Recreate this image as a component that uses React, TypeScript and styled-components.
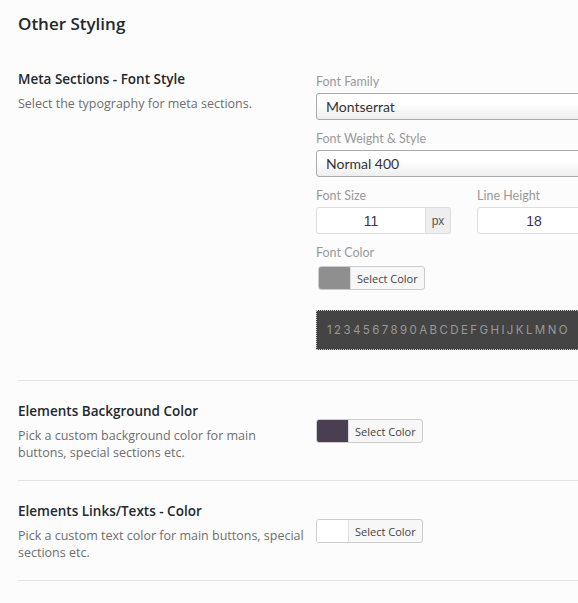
import React from 'react';
import styled, { createGlobalStyle } from 'styled-components';

const GlobalStyle = createGlobalStyle`
    html, body {
        margin: 0;
        padding: 0;
        background: #fcfcfc;
        overflow: hidden;
    }
    body {
        font-family: "Open Sans", "Noto Sans", sans-serif;
        color: #23282d;
    }
`;

const Page = styled.div`
    width: 760px;
    padding: 12px 0 0 18px;
`;

const Heading = styled.h2`
    margin: 0 0 21px;
    font-size: 17px;
    line-height: 24px;
    font-weight: 600;
    color: #23282d;
`;

const Row = styled.div<{ $first?: boolean }>`
    display: grid;
    grid-template-columns: 298px 1fr;
    padding: ${(p) => (p.$first ? '13px 0 20px' : '21px 0 19px')};
    border-bottom: 1px solid #e3e3e3;
`;

const Info = styled.div`
    padding-right: 10px;
`;

const RowTitle = styled.h3`
    margin: 0 0 7px;
    font-size: 13.5px;
    line-height: 18px;
    font-weight: 600;
    color: #23282d;
`;

const RowDesc = styled.p`
    margin: 0;
    font-size: 12.5px;
    line-height: 17px;
    color: #6e6e6e;
`;

const Controls = styled.div<{ $top?: number }>`
    display: flex;
    flex-direction: column;
    padding-top: ${(p) => p.$top ?? 0}px;
`;

const Field = styled.div`
    display: flex;
    flex-direction: column;
    margin-bottom: 10px;
`;

const FieldLabel = styled.label`
    font-family: Lato, "Open Sans", sans-serif;
    font-size: 12.5px;
    line-height: 18px;
    color: #9a9a9a;
    margin-bottom: 2px;
`;

const SelectBox = styled.div`
    height: 27px;
    box-sizing: border-box;
    border: 1px solid #aaa;
    border-radius: 3px;
    background: linear-gradient(#ffffff 40%, #eeeeee);
    padding: 0 9px;
    display: flex;
    align-items: center;
    font-family: Lato, "Open Sans", sans-serif;
    font-size: 14px;
    color: #333;
`;

const InlineFields = styled.div`
    display: grid;
    grid-template-columns: 135px 1fr;
    gap: 26px;
`;

const InputGroup = styled.div`
    display: flex;
    height: 27px;
`;

const NumberInput = styled.div<{ $w?: number; $addon?: boolean }>`
    flex: ${(p) => (p.$w ? `0 0 ${p.$w}px` : '1')};
    box-sizing: border-box;
    border: 1px solid #ddd;
    border-radius: ${(p) => (p.$addon ? '3px 0 0 3px' : '3px')};
    background: #fff;
    display: flex;
    align-items: center;
    justify-content: center;
    font-family: "Liberation Sans", Arial, sans-serif;
    font-size: 14px;
    color: #3a3350;
`;

const Addon = styled.div`
    flex: 0 0 25px;
    box-sizing: border-box;
    border: 1px solid #ddd;
    border-left: none;
    border-radius: 0 3px 3px 0;
    background: #eee;
    display: flex;
    align-items: center;
    justify-content: center;
    font-family: "Liberation Sans", Arial, sans-serif;
    font-size: 12px;
    color: #555;
`;

const ColorButton = styled.div<{ $offset?: number; $mt?: number }>`
    display: inline-flex;
    align-self: flex-start;
    height: 24px;
    box-sizing: border-box;
    border: 1px solid #ccc;
    border-radius: 3px;
    background: #f7f7f7;
    overflow: hidden;
    margin-left: ${(p) => p.$offset ?? 0}px;
    margin-top: ${(p) => p.$mt ?? 0}px;
`;

const Swatch = styled.span<{ $color: string }>`
    width: 31px;
    background: ${(p) => p.$color};
    border-right: 1px solid #ddd;
`;

const ColorText = styled.span`
    padding: 0 6px;
    display: flex;
    align-items: center;
    font-size: 11px;
    color: #444;
`;

const Preview = styled.div`
    margin: 20px 0 10px;
    height: 40px;
    box-sizing: border-box;
    border: 1px dotted #ccc;
    background: #444;
    display: flex;
    align-items: center;
    padding-left: 10px;
    font-family: Inter, "Noto Sans", sans-serif;
    font-size: 11.5px;
    letter-spacing: 2.4px;
    color: #999;
    white-space: nowrap;
    overflow: hidden;
`;

const ColorPicker = ({ color, offset = 0, mt = 0 }: { color: string; offset?: number; mt?: number }) => (
    <ColorButton $offset={offset} $mt={mt}>
        <Swatch $color={color} />
        <ColorText>Select Color</ColorText>
    </ColorButton>
);

export default function App() {
    return (
        <Page>
            <GlobalStyle />
            <Heading>Other Styling</Heading>

            <Row $first>
                <Info>
                    <RowTitle>Meta Sections - Font Style</RowTitle>
                    <RowDesc>Select the typography for meta sections.</RowDesc>
                </Info>
                <Controls $top={3}>
                    <Field>
                        <FieldLabel>Font Family</FieldLabel>
                        <SelectBox>Montserrat</SelectBox>
                    </Field>
                    <Field>
                        <FieldLabel>Font Weight &amp; Style</FieldLabel>
                        <SelectBox>Normal 400</SelectBox>
                    </Field>
                    <InlineFields>
                        <Field>
                            <FieldLabel>Font Size</FieldLabel>
                            <InputGroup>
                                <NumberInput $w={110} $addon>11</NumberInput>
                                <Addon>px</Addon>
                            </InputGroup>
                        </Field>
                        <Field>
                            <FieldLabel>Line Height</FieldLabel>
                            <InputGroup>
                                <NumberInput $w={114}>18</NumberInput>
                            </InputGroup>
                        </Field>
                    </InlineFields>
                    <FieldLabel>Font Color</FieldLabel>
                    <ColorPicker color="#8f8f8f" offset={2} mt={2} />
                    <Preview>1234567890ABCDEFGHIJKLMNO</Preview>
                </Controls>
            </Row>

            <Row>
                <Info>
                    <RowTitle>Elements Background Color</RowTitle>
                    <RowDesc>Pick a custom background color for main buttons, special sections etc.</RowDesc>
                </Info>
                <Controls $top={17}>
                    <ColorPicker color="#4a3f52" />
                </Controls>
            </Row>

            <Row>
                <Info>
                    <RowTitle>Elements Links/Texts - Color</RowTitle>
                    <RowDesc>Pick a custom text color for main buttons, special sections etc.</RowDesc>
                </Info>
                <Controls $top={17}>
                    <ColorPicker color="#ffffff" />
                </Controls>
            </Row>
        </Page>
    );
}
